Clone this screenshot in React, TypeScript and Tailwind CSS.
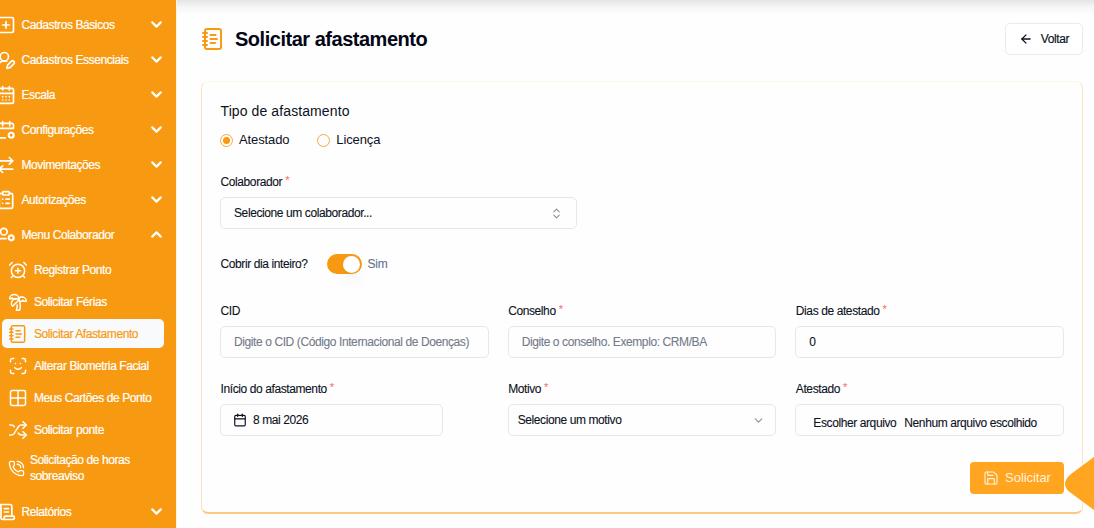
import { useState } from 'react';
import type { ComponentType, ReactNode } from 'react';
import {
  AlarmClockPlus,
  ArrowLeft,
  ArrowRightLeft,
  Calendar,
  CalendarDays,
  ChevronDown,
  ChevronUp,
  ChevronsUpDown,
  ClipboardList,
  Grid2x2,
  NotebookText,
  PhoneCall,
  Save,
  ScanFace,
  ScrollText,
  Shuffle,
  SquarePlus,
  TreePalm,
  UserRoundPen,
} from 'lucide-react';

type IconProps = { size?: number; strokeWidth?: number; className?: string };
type MenuEntry = { label: string; icon: ComponentType<IconProps> };

function CalendarSettings({ size = 24, strokeWidth = 2, className }: IconProps) {
  return (
    <svg
      width={size}
      height={size}
      viewBox="0 0 24 24"
      fill="none"
      stroke="currentColor"
      strokeWidth={strokeWidth}
      strokeLinecap="round"
      strokeLinejoin="round"
      className={className}
    >
      <path d="M8 2v5M16.500 2v5M21 10V6a2 2 0 0 0-2-2H5a2 2 0 0 0-2 2v13.500a2 2 0 0 0 2 2h6M3 10h18" />
      <circle cx="18.200" cy="18.300" r="3" strokeWidth={strokeWidth * 1.3} />
    </svg>
  );
}

function UserSettings({ size = 24, strokeWidth = 2, className }: IconProps) {
  return (
    <svg
      width={size}
      height={size}
      viewBox="0 0 24 24"
      fill="none"
      stroke="currentColor"
      strokeWidth={strokeWidth}
      strokeLinecap="round"
      strokeLinejoin="round"
      className={className}
    >
      <circle cx="9.400" cy="8" r="4" />
      <path d="M2 19c.5-1.800 1.800-2.600 4-2.600h6" />
      <circle cx="18.200" cy="15.400" r="3" strokeWidth={strokeWidth * 1.3} />
    </svg>
  );
}

const menu: MenuEntry[] = [
  { label: 'Cadastros Básicos', icon: SquarePlus },
  { label: 'Cadastros Essenciais', icon: UserRoundPen },
  { label: 'Escala', icon: CalendarDays },
  { label: 'Configurações', icon: CalendarSettings },
  { label: 'Movimentações', icon: ArrowRightLeft },
  { label: 'Autorizações', icon: ClipboardList },
];

const submenu: MenuEntry[] = [
  { label: 'Registrar Ponto', icon: AlarmClockPlus },
  { label: 'Solicitar Férias', icon: TreePalm },
  { label: 'Solicitar Afastamento', icon: NotebookText },
  { label: 'Alterar Biometria Facial', icon: ScanFace },
  { label: 'Meus Cartões de Ponto', icon: Grid2x2 },
  { label: 'Solicitar ponte', icon: Shuffle },
];

function MenuItem({ label, icon: Icon, open = false }: MenuEntry & { open?: boolean }) {
  const Chevron = open ? ChevronUp : ChevronDown;
  return (
    <button className="flex h-[35px] w-full shrink-0 items-center pr-[11px] text-left">
      <Icon size={20} strokeWidth={2} className="-ml-[4.5px] shrink-0" />
      <span className="ml-[6px] flex-1 whitespace-nowrap">{label}</span>
      <Chevron size={17} strokeWidth={3} />
    </button>
  );
}

function Sidebar() {
  return (
    <aside className="flex h-full w-[176px] shrink-0 flex-col overflow-hidden bg-[#f79a12] pt-[7px] text-[12px] tracking-[-0.41px] text-white [-webkit-text-stroke:0.2px]">
      {menu.map(item => (
        <MenuItem key={item.label} {...item} />
      ))}
      <MenuItem label="Menu Colaborador" icon={UserSettings} open />

      <div className="mt-[3px] mr-[12px] ml-[2px] flex flex-col gap-[3px]">
        {submenu.map(({ label, icon: Icon }) => (
          <a
            key={label}
            className={
              label === 'Solicitar Afastamento'
                ? 'flex h-[29px] items-center rounded-[5px] bg-[#f8fafc] pl-[6px] text-[#f79a12]'
                : 'flex h-[29px] items-center pl-[6px]'
            }
          >
            <Icon size={20} strokeWidth={1.8} className="shrink-0" />
            <span className="ml-[6px] whitespace-nowrap">{label}</span>
          </a>
        ))}
        <a className="flex h-[42px] items-center pl-[6px]">
          <PhoneCall size={17} strokeWidth={1.8} className="shrink-0" />
          <span className="ml-[5px] leading-[16px]">
            Solicitação de horas
            <br />
            sobreaviso
          </span>
        </a>
      </div>

      <div className="mt-[5px]">
        <MenuItem label="Relatórios" icon={ScrollText} />
      </div>
    </aside>
  );
}

function Field({ label, required = false, children }: { label: string; required?: boolean; children: ReactNode }) {
  return (
    <div className="flex flex-col">
      <label className="mb-[7px] flex h-[16px] items-center pl-[0.5px] leading-[16px]">
        {label}
        {required && <span className="ml-[3px] -mt-[5px] text-[11px] text-[#f87171]">*</span>}
      </label>
      {children}
    </div>
  );
}

function Radio({ label, checked, onSelect }: { label: string; checked: boolean; onSelect: () => void }) {
  return (
    <button onClick={onSelect} className="flex items-center gap-[6px] text-[13px] tracking-[-0.12px]">
      <span className="flex size-[13px] items-center justify-center rounded-full border border-[#f9a93a]">
        {checked && <span className="size-[7px] rounded-full bg-[#f79a12]" />}
      </span>
      {label}
    </button>
  );
}

export default function App() {
  const [type, setType] = useState('Atestado');
  const [fullDay, setFullDay] = useState(true);

  return (
    <div className="relative flex h-[528px] w-[1094px] overflow-hidden bg-[#fefefe] font-['Liberation_Sans',Arial,sans-serif] text-[#0c1222]">
      <Sidebar />

      <main className="flex-1 border-l border-[#fff3e0] bg-[linear-gradient(to_bottom,#e4e4e4_0px,#f6f6f6_7px,#fefefe_15px)] pt-[23px] pr-[11px] pl-[24px]">
        <header className="flex h-[32px] items-center">
          <NotebookText size={24} className="text-[#f79a12]" />
          <h1 className="ml-[10px] text-[20px] font-bold tracking-[-0.48px] text-[#020617]">Solicitar afastamento</h1>
          <button className="ml-auto flex h-[32px] w-[78px] items-center justify-center gap-[8px] rounded-[5px] border border-[#e8eaf0] bg-white text-[12px] tracking-[-0.4px] [-webkit-text-stroke:0.15px]">
            <ArrowLeft size={14} strokeWidth={2.2} />
            Voltar
          </button>
        </header>

        <section className="mt-[26px] h-[433px] rounded-[7px] border-x border-t border-b-2 border-x-[#fde3bd] border-t-[#fff6e8] border-b-[#fbc97f] bg-[#fefefe] px-[18px] pt-[20px] text-[12px] tracking-[-0.4px] [-webkit-text-stroke:0.1px]">
          <h2 className="pl-[0.5px] text-[14px] leading-[18px] tracking-[0.1px] [-webkit-text-stroke:0px]">Tipo de afastamento</h2>
          <div className="mt-[10px] flex h-[20px] gap-[28px] [-webkit-text-stroke:0px]">
            <Radio label="Atestado" checked={type === 'Atestado'} onSelect={() => setType('Atestado')} />
            <Radio label="Licença" checked={type === 'Licença'} onSelect={() => setType('Licença')} />
          </div>

          <div className="mt-[24px] w-[357px]">
            <Field label="Colaborador" required>
              <button className="flex h-[32px] items-center justify-between rounded-[5px] border border-[#e5e7eb] pr-[13px] pl-[13px]">
                Selecione um colaborador...
                <ChevronsUpDown size={13} className="text-[#8b8f98]" />
              </button>
            </Field>
          </div>

          <div className="mt-[25px] flex h-[20px] items-center pl-[0.5px]">
            <span className="w-[88px] whitespace-nowrap">Cobrir dia inteiro?</span>
            <button
              onClick={() => setFullDay(!fullDay)}
              className={
                fullDay
                  ? 'ml-[18px] flex h-[20px] w-[35px] items-center justify-end rounded-full bg-[#f79a12] p-[1.5px]'
                  : 'ml-[18px] flex h-[20px] w-[35px] items-center justify-start rounded-full bg-[#e2e8f0] p-[1.5px]'
              }
            >
              <span className="size-[17px] rounded-full bg-white shadow-lg" />
            </button>
            <span className="ml-[6px] text-[12px] tracking-[-0.2px] text-[#64748b]">{fullDay ? 'Sim' : 'Não'}</span>
          </div>

          <div className="mt-[29px] grid grid-cols-3 gap-x-[19px] gap-y-[23px]">
            <Field label="CID">
              <input
                placeholder="Digite o CID (Código Internacional de Doenças)"
                className="h-[32px] rounded-[5px] border border-[#e5e7eb] px-[13px] placeholder:text-[#737b89]"
              />
            </Field>
            <Field label="Conselho" required>
              <input
                placeholder="Digite o conselho. Exemplo: CRM/BA"
                className="h-[32px] rounded-[5px] border border-[#e5e7eb] px-[13px] placeholder:text-[#737b89]"
              />
            </Field>
            <Field label="Dias de atestado" required>
              <input defaultValue="0" className="h-[32px] rounded-[5px] border border-[#e5e7eb] px-[13px]" />
            </Field>
            <Field label="Início do afastamento" required>
              <button className="flex h-[32px] w-[223px] items-center gap-[6px] rounded-[5px] border border-[#e5e7eb] pl-[12px]">
                <Calendar size={14} />
                8 mai 2026
              </button>
            </Field>
            <Field label="Motivo" required>
              <button className="flex h-[32px] items-center justify-between rounded-[5px] border border-[#e5e7eb] pr-[10px] pl-[9px]">
                Selecione um motivo
                <ChevronDown size={13} className="text-[#8b8f98]" />
              </button>
            </Field>
            <Field label="Atestado" required>
              <button className="flex h-[32px] items-center gap-[8px] rounded-[5px] border border-[#e5e7eb] pt-[6px] pl-[17px]">
                <span>Escolher arquivo</span>
                <span>Nenhum arquivo escolhido</span>
              </button>
            </Field>
          </div>

          <div className="mt-[26px] flex justify-end">
            <button className="flex h-[32px] w-[94px] items-center justify-center gap-[6px] rounded-[4px] bg-[#ffa520] text-[13px] tracking-[-0.05px] text-[#fff3df] [-webkit-text-stroke:0px]">
              <Save size={16} strokeWidth={1.7} />
              Solicitar
            </button>
          </div>
        </section>
      </main>

      {/* floating arrow that points at the submit button */}
      <svg className="absolute top-[450px] right-0" width="34" height="68" viewBox="0 0 34 68">
        <path d="M34 7 L11 24 Q5 29 5 34 Q5 39 11 43 L34 60 Z" fill="#ffa520" />
      </svg>
    </div>
  );
}
